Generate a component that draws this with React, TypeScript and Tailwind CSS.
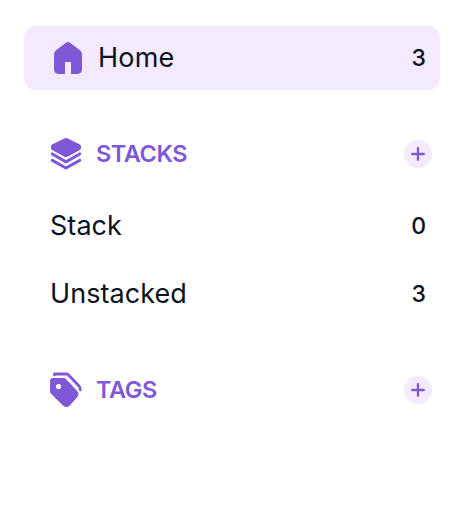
import type { ReactNode } from "react";

function HomeIcon() {
  return (
    <svg width="28" height="32" viewBox="0 0 28 32" fill="#7f58d8">
      <path d="M12 .7Q14-.7 16 .7L26 8.2Q28 9.7 28 12V27Q28 32 23 32H17V20H11V32H5Q0 32 0 27V12Q0 9.7 2 8.2Z" />
    </svg>
  );
}

function StackIcon() {
  return (
    <svg width="32" height="32" viewBox="0 0 32 32" fill="none" stroke="#7f58d8" strokeWidth="3.1" strokeLinecap="round" strokeLinejoin="round">
      <path d="M14.2.6Q16-.4 17.8.6L30 6.6Q31.5 8 31.1 10Q31 11.5 29.5 12.3L18 18.5Q16 19.5 14 18.5L2.5 12.3Q1 11.5 .9 10Q.5 8 2 6.6Z" fill="#7f58d8" stroke="none" />
      <path d="M2.3 16L16 23.8L29.7 16" />
      <path d="M2.3 22.3L16 30L29.7 22.3" />
    </svg>
  );
}

function TagsIcon() {
  return (
    <svg width="32" height="36" viewBox="0 0 32 36" fill="none">
      <path
        fillRule="evenodd"
        d="M3 6H13.5Q15 6 16.2 7.2L26.8 18.5Q30 22 27 25.5L19.8 33.5Q16.5 36.5 13.2 33.8L1.2 22Q0 20.8 0 19V9Q0 6 3 6ZM8.5 12A2.6 2.6 0 1 0 8.5 17.2A2.6 2.6 0 1 0 8.5 12Z"
        fill="#7f58d8"
      />
      <path d="M4.5 2.8V2H16.5Q17.5 2 18.3 2.8L29 14Q30.3 15.3 30.3 17.8" stroke="#7f58d8" strokeWidth="2.8" strokeLinecap="round" strokeLinejoin="round" />
    </svg>
  );
}

function SectionHeader({ icon, title }: { icon: ReactNode; title: string }) {
  return (
    <div className="flex h-9 items-center pr-[26px] pl-[50px]">
      {icon}
      <h2 className="ml-3.5 text-[23.5px] leading-9 font-semibold tracking-[-0.45px] text-[#7f58d8]">{title}</h2>
      <button className="ml-auto flex size-7 items-center justify-center rounded-full bg-[#f4eaff]" aria-label={`Add ${title}`}>
        <svg width="14" height="14" viewBox="0 0 14 14" stroke="#7f58d8" strokeWidth="2.3" strokeLinecap="round">
          <path d="M7 1.2V12.8M1.2 7H12.8" />
        </svg>
      </button>
    </div>
  );
}

function Count({ value }: { value: number }) {
  return <span className="ml-auto text-[23px] font-medium">{value}</span>;
}

function StackRow({ name, count }: { name: string; count: number }) {
  return (
    <div className="flex h-[68px] items-center pr-8 pl-[50px]">
      <span className="text-[27px] tracking-[0.05px]">{name}</span>
      <Count value={count} />
    </div>
  );
}

export default function App() {
  return (
    <nav className="h-[522px] w-[458px] bg-white pt-[26px] text-[#0b1220] font-['Inter',sans-serif]">
      <div className="mr-[18px] ml-6 flex h-16 items-center rounded-xl bg-[#f4eaff] pr-3.5 pl-[30px]">
        <HomeIcon />
        <span className="ml-4 text-[27px] tracking-[0.2px]">Home</span>
        <Count value={3} />
      </div>

      <div className="mt-[46px]">
        <SectionHeader icon={<StackIcon />} title="STACKS" />
      </div>

      <div className="mt-5">
        <StackRow name="Stack" count={0} />
        <StackRow name="Unstacked" count={3} />
      </div>

      <div className="mt-11">
        <SectionHeader icon={<TagsIcon />} title="TAGS" />
      </div>
    </nav>
  );
}
